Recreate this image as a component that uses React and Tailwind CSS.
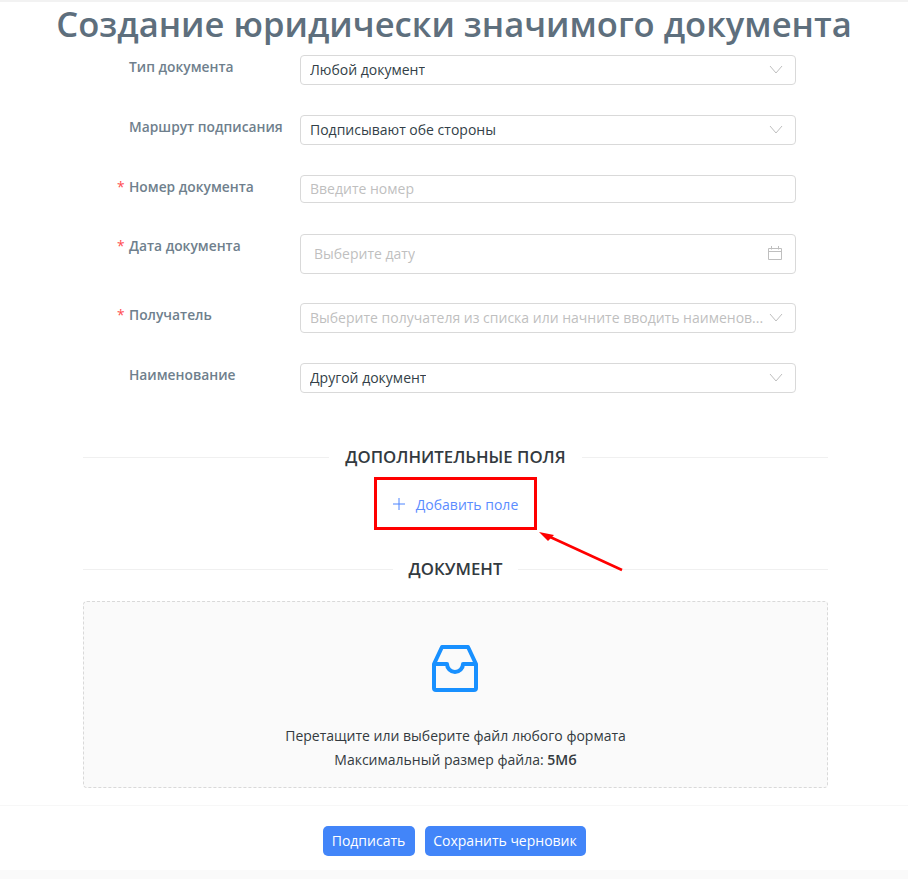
const FONT = "font-['Open_Sans','Noto_Sans',sans-serif]";

function Chevron() {
  return (
    <svg width="14" height="9" viewBox="0 0 14 9" fill="none" className="shrink-0 mr-[3px]">
      <path d="M1 1l6 7 6-7" stroke="#bfbfbf" strokeWidth="1" />
    </svg>
  );
}

function CalendarIcon() {
  return (
    <svg width="14" height="14" viewBox="0 0 14 14" fill="none" className="shrink-0">
      <path d="M.5 2.5h13v11H.5zM.5 5.5h13M3.5 0v3.5M10.5 0v3.5" stroke="#bfbfbf" strokeWidth="1" />
    </svg>
  );
}

function Row({ label, required, children, className }) {
  return (
    <div className={`flex items-start ${className}`}>
      <div className="w-[217px] shrink-0 flex justify-end">
        <div className="w-[171px] flex text-[13.8px] leading-[23px] font-semibold text-[#6f7f8d] relative">
          {required && <span className="absolute left-[-12px] top-0 text-[#ff4d4f] font-normal">*</span>}
          {label}
        </div>
      </div>
      {children}
    </div>
  );
}

function Field({ text, placeholder, icon, h = 'h-[30px]', px = 'px-[9px]' }) {
  return (
    <div className={`w-[496px] ${h} ${px} pb-[2px] flex items-center justify-between border border-[#d9d9d9] rounded-[4px] bg-white text-[14px]`}>
      <span className={placeholder ? 'text-[#bfbfbf] truncate' : 'text-[#333f48] truncate'}>{text || placeholder}</span>
      {icon}
    </div>
  );
}

function Divider({ children, className }) {
  return (
    <div className={`flex items-center gap-4 ${className}`}>
      <div className="flex-1 h-px bg-[#f0f0f0]" />
      <span className="text-[16.8px] leading-[24px] font-semibold text-[#333a40]">{children}</span>
      <div className="flex-1 h-px bg-[#f0f0f0]" />
    </div>
  );
}

export default function App() {
  return (
    <div className={`${FONT} relative w-[908px] h-[879px] overflow-hidden bg-[#fafafa]`}>
      <div className="h-[2px] bg-[#f2f2f2]" />
      <div className="bg-white h-[803px] flex flex-col">
        <h1 className="text-[34.6px] leading-[42px] font-semibold text-[#5e6f7d] text-center mt-[1px] whitespace-nowrap">
          Создание юридически значимого документа
        </h1>
        <div className="ml-[83px] w-[745px] mt-[10px] flex flex-col">
          <Row label="Тип документа">
            <Field text="Любой документ" icon={<Chevron />} />
          </Row>
          <Row label="Маршрут подписания" className="mt-[30px]">
            <Field text="Подписывают обе стороны" icon={<Chevron />} />
          </Row>
          <Row label="Номер документа" required className="mt-[30px]">
            <Field placeholder="Введите номер" h="h-[28px]" />
          </Row>
          <Row label="Дата документа" required className="mt-[31px]">
            <Field placeholder="Выберите дату" icon={<CalendarIcon />} h="h-[40px]" px="px-[13px]" />
          </Row>
          <Row label="Получатель" required className="mt-[29px]">
            <Field placeholder="Выберите получателя из списка или начните вводить наименов..." icon={<Chevron />} />
          </Row>
          <Row label="Наименование" className="mt-[30px]">
            <Field text="Другой документ" icon={<Chevron />} />
          </Row>

          <Divider className="mt-[52px]">ДОПОЛНИТЕЛЬНЫЕ ПОЛЯ</Divider>
          <div className="flex justify-center mt-[8px]">
            <div className="w-[163px] h-[53px] border-[3px] border-[#ff0000] pt-[1px] flex items-center justify-center gap-[11px] text-[14px] text-[#5b8cff]">
              <svg width="12" height="12" viewBox="0 0 12 12" fill="none" className="shrink-0">
                <path d="M6 0v12M0 6h12" stroke="#4d84ff" strokeWidth="1" />
              </svg>
              <span>Добавить поле</span>
            </div>
          </div>
          <Divider className="mt-[27px]">ДОКУМЕНТ</Divider>

          <div className="mt-[20px] h-[187px] border border-dashed border-[#d9d9d9] rounded-[4px] bg-[#fafafa] flex flex-col items-center">
            <svg width="46" height="48" viewBox="0 0 46 48" fill="none" className="mt-[43px] -ml-[1px]">
              <path
                d="M10 2h26l8 17v24a2 2 0 0 1-2 2H4a2 2 0 0 1-2-2V19zM2 19h13a8 8 0 0 0 16 0h13"
                stroke="#1890ff"
                strokeWidth="4"
                strokeLinejoin="round"
              />
            </svg>
            <div className="mt-[31px] text-[14px] leading-[24px] text-[#333a40] text-center">
              <div>Перетащите или выберите файл любого формата</div>
              <div>
                Максимальный размер файла: <b className="font-semibold">5Мб</b>
              </div>
            </div>
          </div>
        </div>
      </div>
      <div className="h-[65px] bg-white border-t border-[#f7f7f7] flex items-center justify-center gap-[10px] pt-[5px]">
        <button className="h-[30px] w-[92px] rounded-[5px] bg-[#4285f9] text-white text-[14px]">Подписать</button>
        <button className="h-[30px] w-[161px] rounded-[5px] bg-[#4285f9] text-white text-[14px] whitespace-nowrap">Сохранить черновик</button>
      </div>

      {/* annotation arrow */}
      <svg className="absolute left-[530px] top-[525px]" width="100" height="50" viewBox="0 0 100 50" fill="none">
        <path d="M92 45L18 11" stroke="#ff0000" strokeWidth="2.5" />
        <path d="M9 7l15 3-6 6z" fill="#ff0000" />
      </svg>
    </div>
  );
}
